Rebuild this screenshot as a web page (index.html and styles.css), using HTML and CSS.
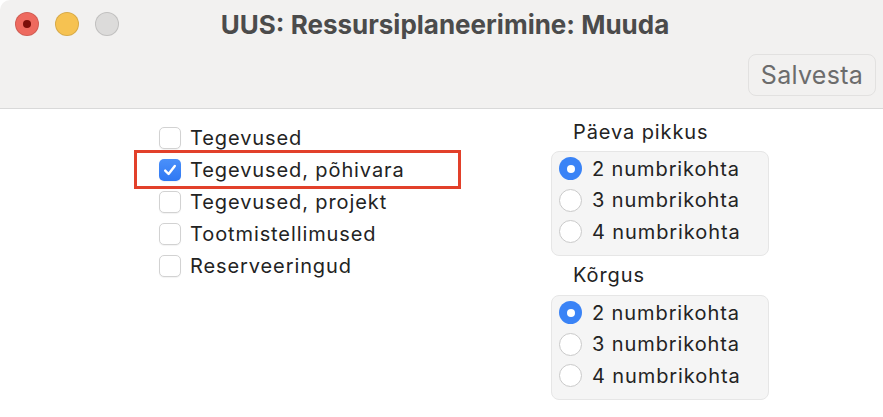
FILE: index.html
```html
<!DOCTYPE html>
<html lang="et">
<head>
    <meta charset="UTF-8">
    <title>UUS: Ressursiplaneerimine: Muuda</title>
    <link rel="stylesheet" href="styles.css">
</head>
<body>
    <div class="window">
        <div class="header">
            <div class="titlebar">
                <div class="lights">
                    <span class="light close"></span>
                    <span class="light minimize"></span>
                    <span class="light zoom"></span>
                </div>
                <div class="title">UUS: Ressursiplaneerimine: Muuda</div>
            </div>
            <div class="toolbar">
                <button class="save-btn">Salvesta</button>
            </div>
        </div>
        <div class="content">
            <div class="check-list">
                <label class="check-row">
                    <span class="checkbox"></span>
                    <span>Tegevused</span>
                </label>
                <label class="check-row marked">
                    <span class="checkbox checked">
                        <svg width="16" height="16" viewBox="0 0 16 16"><path d="M3.2 8.6 L6.6 12 L12.8 4" fill="none" stroke="#fff" stroke-width="2.4" stroke-linecap="round" stroke-linejoin="round"/></svg>
                    </span>
                    <span>Tegevused, põhivara</span>
                    <span class="highlight"></span>
                </label>
                <label class="check-row">
                    <span class="checkbox"></span>
                    <span>Tegevused, projekt</span>
                </label>
                <label class="check-row">
                    <span class="checkbox"></span>
                    <span>Tootmistellimused</span>
                </label>
                <label class="check-row">
                    <span class="checkbox"></span>
                    <span>Reserveeringud</span>
                </label>
            </div>
            <div class="options">
                <div class="group-label">Päeva pikkus</div>
                <div class="radio-box">
                    <label class="radio-row"><span class="radio checked"></span>2 numbrikohta</label>
                    <label class="radio-row"><span class="radio"></span>3 numbrikohta</label>
                    <label class="radio-row"><span class="radio"></span>4 numbrikohta</label>
                </div>
                <div class="group-label second">Kõrgus</div>
                <div class="radio-box">
                    <label class="radio-row"><span class="radio checked"></span>2 numbrikohta</label>
                    <label class="radio-row"><span class="radio"></span>3 numbrikohta</label>
                    <label class="radio-row"><span class="radio"></span>4 numbrikohta</label>
                </div>
            </div>
        </div>
    </div>
</body>
</html>
```

FILE: styles.css
```css
body, html {
    margin: 0;
    height: 100%;
    background: #fff;
    font-family: Inter, "Liberation Sans", sans-serif;
    overflow: hidden;
}
.window {
    width: 883px;
    height: 417px;
    border-top-left-radius: 10px;
    overflow: hidden;
    background: #fff;
}
.header {
    height: 108px;
    background: #f2f1f0;
    border-bottom: 1px solid #d9d9d9;
    display: flex;
    flex-direction: column;
}
.titlebar {
    height: 48px;
    display: flex;
    align-items: center;
}
.lights {
    display: flex;
    gap: 16px;
    padding-left: 15px;
}
.light {
    width: 22px;
    height: 22px;
    border-radius: 50%;
    border: 1px solid rgba(0, 0, 0, 0.12);
    box-sizing: content-box;
}
.close {
    background: #ee6a5f;
    display: flex;
    align-items: center;
    justify-content: center;
}
.close::after {
    content: "";
    width: 8px;
    height: 8px;
    border-radius: 50%;
    background: #7c0f0a;
}
.minimize {
    background: #f6c251;
}
.zoom {
    background: #dcdbda;
}
.title {
    flex: 1;
    text-align: center;
    font-weight: bold;
    font-size: 26px;
    color: #4b4b4b;
    margin-right: 112px;
    padding-top: 1px;
}
.toolbar {
    display: flex;
    justify-content: flex-end;
    padding: 6px 7px 0 0;
}
.save-btn {
    width: 128px;
    height: 42px;
    padding: 0;
    border: 1px solid #e2e1e0;
    border-radius: 8px;
    background: #f2f1f0;
    font-family: inherit;
    font-size: 25px;
    letter-spacing: 0.3px;
    color: #6c6c6c;
}
.content {
    display: flex;
    padding-top: 13px;
}
.check-list {
    display: flex;
    flex-direction: column;
    padding-left: 159px;
    width: 551px;
    flex: none;
    box-sizing: border-box;
}
.check-row {
    height: 32px;
    display: flex;
    align-items: center;
    gap: 9px;
    font-size: 20px;
    letter-spacing: 0.9px;
    color: #232323;
    position: relative;
}
.checkbox {
    width: 22px;
    height: 22px;
    box-sizing: border-box;
    border: 1px solid #d2d2d2;
    border-radius: 5px;
    background: #fff;
    box-shadow: 0 1px 1px rgba(0, 0, 0, 0.05);
    display: flex;
    align-items: center;
    justify-content: center;
}
.checkbox.checked {
    border: none;
    background: linear-gradient(#4a90fa, #2f78f3);
}
.highlight {
    position: absolute;
    left: -25px;
    top: -4px;
    width: 321px;
    height: 33px;
    border: 3px solid #e2402a;
}
.options {
    display: flex;
    flex-direction: column;
    margin-top: -2px;
}
.group-label {
    height: 24px;
    line-height: 24px;
    font-size: 20px;
    letter-spacing: 0.9px;
    color: #232323;
    padding-left: 22px;
    margin-bottom: 7px;
}
.group-label.second {
    margin-top: 7px;
    margin-bottom: 8px;
}
.radio-box {
    width: 218px;
    height: 105px;
    box-sizing: border-box;
    background: #f5f5f5;
    border: 1px solid #e6e6e6;
    border-radius: 8px;
    padding: 1px 0 0 7px;
}
.radio-row {
    height: 31.5px;
    display: flex;
    align-items: center;
    gap: 10px;
    font-size: 20px;
    letter-spacing: 0.9px;
    color: #232323;
}
.radio {
    width: 23px;
    height: 23px;
    flex: none;
    box-sizing: border-box;
    border-radius: 50%;
    border: 1px solid #cacaca;
    background: #fff;
    display: flex;
    align-items: center;
    justify-content: center;
}
.radio.checked {
    border: none;
    background: #3a83f6;
}
.radio.checked::after {
    content: "";
    width: 8px;
    height: 8px;
    border-radius: 50%;
    background: #fff;
}
```
